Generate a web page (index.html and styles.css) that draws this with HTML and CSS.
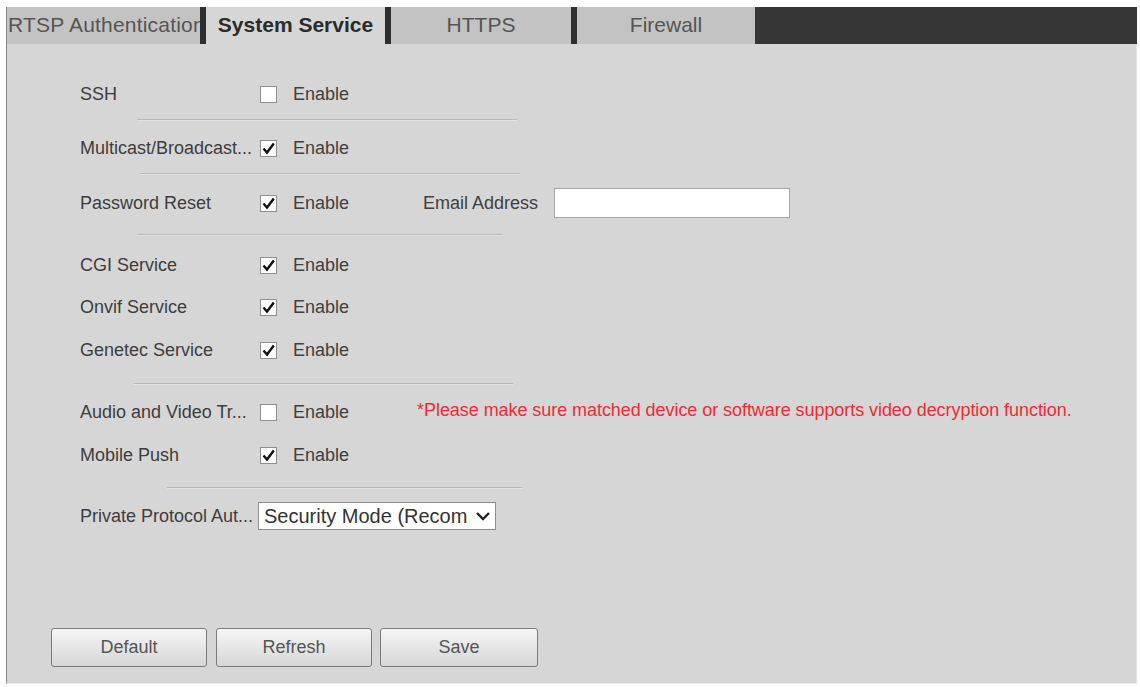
FILE: index.html
```html
<!DOCTYPE html>
<html>
<head>
<meta charset="utf-8">
<link rel="stylesheet" href="styles.css">
</head>
<body>
<div class="page">
  <div class="tabs">
    <div class="tab tab-first">RTSP Authentication</div>
    <div class="tab tab-active">System Service</div>
    <div class="tab tab-https">HTTPS</div>
    <div class="tab tab-fw">Firewall</div>
    <div class="tab-fill"></div>
  </div>
  <div class="panel">
    <div class="form">
      <div class="row">
        <div class="label">SSH</div>
        <span class="cb"></span><span class="en">Enable</span>
      </div>
      <div class="sep sep-a"></div>
      <div class="row">
        <div class="label">Multicast/Broadcast...</div>
        <span class="cb"><svg class="tick" viewBox="0 0 17 17" width="17" height="17"><path d="M3.5 8.5 L7 12.5 L13.8 3.6" fill="none" stroke="#111" stroke-width="2.4"/></svg></span><span class="en">Enable</span>
      </div>
      <div class="sep sep-b"></div>
      <div class="row">
        <div class="label">Password Reset</div>
        <span class="cb"><svg class="tick" viewBox="0 0 17 17" width="17" height="17"><path d="M3.5 8.5 L7 12.5 L13.8 3.6" fill="none" stroke="#111" stroke-width="2.4"/></svg></span><span class="en">Enable</span>
        <span class="email-label">Email Address</span>
        <span class="text-input"></span>
      </div>
      <div class="sep sep-c"></div>
      <div class="row">
        <div class="label">CGI Service</div>
        <span class="cb"><svg class="tick" viewBox="0 0 17 17" width="17" height="17"><path d="M3.5 8.5 L7 12.5 L13.8 3.6" fill="none" stroke="#111" stroke-width="2.4"/></svg></span><span class="en">Enable</span>
      </div>
      <div class="row row-tall">
        <div class="label">Onvif Service</div>
        <span class="cb"><svg class="tick" viewBox="0 0 17 17" width="17" height="17"><path d="M3.5 8.5 L7 12.5 L13.8 3.6" fill="none" stroke="#111" stroke-width="2.4"/></svg></span><span class="en">Enable</span>
      </div>
      <div class="row">
        <div class="label">Genetec Service</div>
        <span class="cb"><svg class="tick" viewBox="0 0 17 17" width="17" height="17"><path d="M3.5 8.5 L7 12.5 L13.8 3.6" fill="none" stroke="#111" stroke-width="2.4"/></svg></span><span class="en">Enable</span>
      </div>
      <div class="sep sep-d"></div>
      <div class="row row-tall">
        <div class="label">Audio and Video Tr...</div>
        <span class="cb"></span><span class="en">Enable</span>
        <span class="warn">*Please make sure matched device or software supports video decryption function.</span>
      </div>
      <div class="row">
        <div class="label">Mobile Push</div>
        <span class="cb"><svg class="tick" viewBox="0 0 17 17" width="17" height="17"><path d="M3.5 8.5 L7 12.5 L13.8 3.6" fill="none" stroke="#111" stroke-width="2.4"/></svg></span><span class="en">Enable</span>
      </div>
      <div class="sep sep-e"></div>
      <div class="row">
        <div class="label label-sel">Private Protocol Aut...</div>
        <div class="select">
          <span class="select-text">Security Mode (Recom</span>
          <svg class="chev" viewBox="0 0 16 12" width="16" height="12"><path d="M2 3 L8 9 L14 3" fill="none" stroke="#222" stroke-width="2.4"/></svg>
        </div>
      </div>
    </div>
    <div class="buttons">
      <div class="btn">Default</div>
      <div class="btn">Refresh</div>
      <div class="btn btn-save">Save</div>
    </div>
  </div>
</div>
</body>
</html>
```

FILE: styles.css
```css
html, body {
  margin: 0;
  padding: 0;
  background: #ffffff;
}

body {
  font-family: "Liberation Sans", Arial, sans-serif;
  color: #3d3d3d;
}

.page {
  padding-top: 7px;
  padding-left: 6px;
  width: 1131px;
}

.tabs {
  display: flex;
  height: 37px;
}

.tab {
  background: #c3c3c3;
  color: #555555;
  font-size: 21px;
  display: flex;
  align-items: center;
  justify-content: center;
  white-space: nowrap;
  overflow: hidden;
  border-left: 6px solid #2f2f2f;
  box-sizing: border-box;
  padding-bottom: 2px;
}

.tab-first {
  border-left: 1px solid #8a8a8a;
  width: 194px;
  justify-content: flex-start;
  padding-left: 1px;
  letter-spacing: 0.2px;
}

.tab-active {
  width: 185px;
  background: #d6d6d6;
  color: #2b2b2b;
  font-weight: bold;
}

.tab-https {
  width: 186px;
}

.tab-fw {
  width: 184px;
}

.tab-fill {
  flex: 1;
  background: #363636;
}

.panel {
  background: #d6d6d6;
  border-left: 1px solid #8a8a8a;
  border-right: 1px solid #e4e4e4;
  border-bottom: 1px solid #ececec;
  display: flex;
  flex-direction: column;
  justify-content: space-between;
  box-sizing: border-box;
  height: 640px;
}

.form {
  padding-top: 29px;
  padding-left: 73px;
  display: flex;
  flex-direction: column;
}

.row {
  height: 42px;
  display: flex;
  align-items: center;
  font-size: 18px;
}

.row-tall {
  height: 43px;
}

.label {
  width: 180px;
  white-space: nowrap;
  color: #3d3d3d;
}

.label-sel {
  width: 178px;
}

.cb {
  width: 17px;
  height: 17px;
  box-sizing: border-box;
  border: 1px solid #8f8f8f;
  background: #ffffff;
  position: relative;
}

.tick {
  position: absolute;
  left: -1px;
  top: -1px;
}

.en {
  margin-left: 16px;
  color: #404040;
}

.email-label {
  margin-left: 74px;
  color: #404040;
}

.text-input {
  margin-left: 16px;
  width: 236px;
  height: 30px;
  box-sizing: border-box;
  background: #ffffff;
  border: 1px solid #a8a8a8;
}

.warn {
  margin-left: 68px;
  color: #ee2b33;
  white-space: nowrap;
  position: relative;
  top: -2px;
  letter-spacing: -0.06px;
}

.sep {
  height: 0;
  width: 380px;
  margin-left: 57px;
  border-top: 1px solid #b9b9b9;
  border-bottom: 1px solid #e3e3e3;
}

.sep-a {
  margin-top: 4px;
  margin-bottom: 6px;
}

.sep-b {
  margin-top: 4px;
  margin-bottom: 7px;
  margin-left: 60px;
}

.sep-c {
  margin-top: 10px;
  margin-bottom: 8px;
  width: 366px;
}

.sep-d {
  margin-top: 12px;
  margin-bottom: 6px;
  margin-left: 53px;
}

.sep-e {
  margin-top: 11px;
  margin-bottom: 6px;
  margin-left: 87px;
  width: 356px;
}

.select {
  width: 238px;
  height: 28px;
  box-sizing: border-box;
  background: #ffffff;
  border: 1px solid #8d8d8d;
  display: flex;
  align-items: center;
  padding-left: 5px;
  padding-right: 4px;
}

.select-text {
  flex: 1;
  white-space: nowrap;
  color: #333333;
  font-size: 20px;
}

.chev {
  margin-left: 2px;
  flex: none;
}

.buttons {
  display: flex;
  padding-left: 44px;
  padding-bottom: 16px;
}

.btn {
  width: 156px;
  height: 39px;
  box-sizing: border-box;
  border: 1px solid #7b7b7b;
  border-radius: 3px;
  background: linear-gradient(#f6f6f6, #e6e6e6 50%, #d6d6d6);
  color: #555555;
  font-size: 18px;
  display: flex;
  align-items: center;
  justify-content: center;
  margin-right: 9px;
}

.btn-save {
  width: 158px;
  margin-right: 0;
  margin-left: -1px;
}
```
